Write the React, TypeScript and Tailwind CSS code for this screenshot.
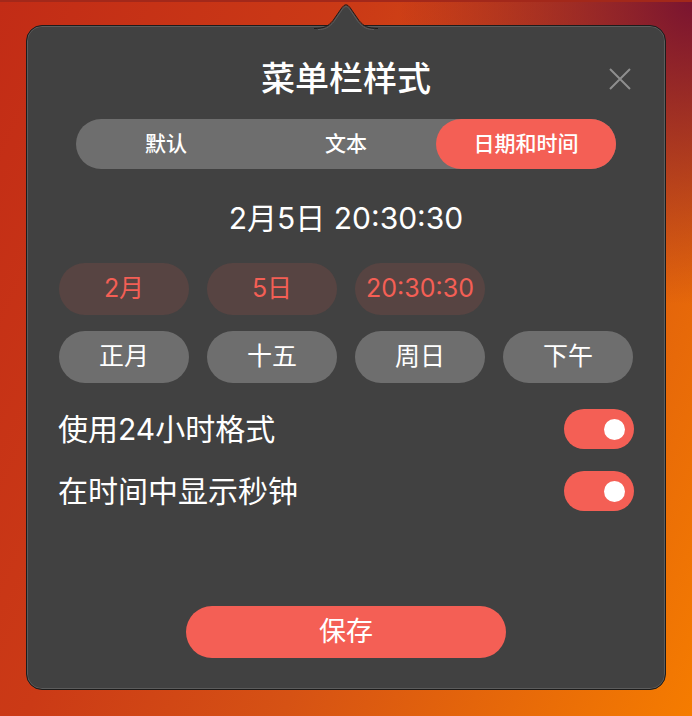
import React from "react";

const font = { fontFamily: '"Inter", "Noto Sans CJK SC", sans-serif' };

function Toggle() {
  return (
    <div className="w-[70px] h-[40px] rounded-full bg-[#f45f55] flex items-center justify-end pr-[9px]">
      <div className="w-[21px] h-[21px] rounded-full bg-white" />
    </div>
  );
}

export default function App() {
  const chips1 = ["2月", "5日", "20:30:30"];
  const chips2 = ["正月", "十五", "周日", "下午"];
  return (
    <div
      className="relative w-[692px] h-[716px] overflow-hidden border-t-2 border-[#a3281a] bg-[radial-gradient(ellipse_at_100%_0%,#7a1430_0%,rgba(122,20,48,0)_30%),linear-gradient(115deg,#c22c16_0%,#cb3a16_35%,#d65214_60%,#f57c00_100%)]"
      style={font}
    >
      <div className="ml-[26px] mt-[23px] w-[640px] h-[665px] rounded-[16px] border border-[#1c1c1c] bg-[#414141] shadow-[inset_0_0_0_1px_#5c5c5c] flex flex-col items-center relative">
        <div className="relative w-full flex justify-center mt-[32px] h-[42px] items-center">
          <div className="text-[34px] leading-[42px] text-white font-medium">菜单栏样式</div>
          <svg className="absolute right-[34px] top-[10px]" width="22" height="22" viewBox="0 0 22 22">
            <path d="M1 1 L21 21 M21 1 L1 21" stroke="#8e8e8e" strokeWidth="2" />
          </svg>
        </div>
        <div className="mt-[19px] w-[540px] h-[50px] rounded-full bg-[#6e6e6e] grid grid-cols-3 text-[21px] text-white font-medium">
          <div className="flex items-center justify-center">默认</div>
          <div className="flex items-center justify-center">文本</div>
          <div className="flex items-center justify-center rounded-full bg-[#f45f55]">日期和时间</div>
        </div>
        <div className="mt-[30px] h-[38px] leading-[38px] text-[30px] text-white">2月5日 20:30:30</div>
        <div className="mt-[26px] w-[574px] flex flex-col gap-[16px]">
          <div className="flex gap-[18px]">
            {chips1.map((c) => (
              <div key={c} className="w-[130px] h-[52px] rounded-full bg-[#574442] text-[#f45f55] text-[25px] flex items-center justify-center">
                {c}
              </div>
            ))}
          </div>
          <div className="flex gap-[18px]">
            {chips2.map((c) => (
              <div key={c} className="w-[130px] h-[52px] rounded-full bg-[#6e6e6e] text-white text-[25px] flex items-center justify-center">
                {c}
              </div>
            ))}
          </div>
        </div>
        <div className="mt-[26px] w-[576px] flex flex-col gap-[22px]">
          <div className="flex items-center justify-between h-[40px]">
            <div className="text-[30px] leading-[40px] text-white">使用24小时格式</div>
            <Toggle />
          </div>
          <div className="flex items-center justify-between h-[40px]">
            <div className="text-[30px] leading-[40px] text-white">在时间中显示秒钟</div>
            <Toggle />
          </div>
        </div>
        <div className="mt-auto mb-[31px] w-[320px] h-[52px] rounded-full bg-[#f45f55] text-white text-[27px] flex items-center justify-center">
          保存
        </div>
      </div>
      <svg className="absolute left-[310px] top-0" width="72" height="30" viewBox="310 0 72 30">
        <path d="M314 27 C324 27 328 25 333 19 L342 6 Q346 0.5 350 6 L359 19 C364 25 368 27 378 27 L378 30 L314 30 Z" fill="#414141" />
        <path d="M314 26.5 C324 26.5 328 24.5 333 18.5 L342 5.5 Q346 0 350 5.5 L359 18.5 C364 24.5 368 26.5 378 26.5" fill="none" stroke="#1c1c1c" strokeWidth="1" />
        <path d="M318 27.5 C325 27.5 329 25.5 334 19.5 L342.5 7 Q346 2 349.5 7 L358 19.5 C363 25.5 367 27.5 374 27.5" fill="none" stroke="#5c5c5c" strokeWidth="1" />
      </svg>
    </div>
  );
}
